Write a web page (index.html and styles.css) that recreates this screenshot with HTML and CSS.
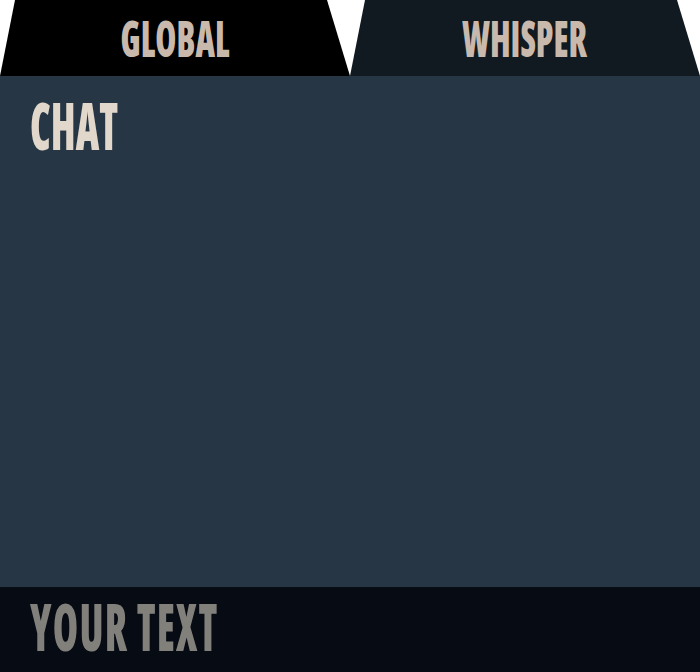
FILE: index.html
```html
<!DOCTYPE html>
<html lang="en">
<head>
<meta charset="utf-8">
<title>Chat</title>
<link rel="stylesheet" href="styles.css">
</head>
<body>
<div class="app">
  <nav class="tabs">
    <div class="tab tab-global"><span class="label">GLOBAL</span></div>
    <div class="tab tab-whisper"><span class="label">WHISPER</span></div>
  </nav>
  <main class="chat">
    <h1 class="chat-title"><span class="label">CHAT</span></h1>
  </main>
  <footer class="input-bar">
    <span class="label placeholder">YOUR TEXT</span>
  </footer>
</div>
</body>
</html>
```
FILE: styles.css
```css
html, body {
  margin: 0;
  padding: 0;
  background: #ffffff;
}
.app {
  width: 700px;
  height: 672px;
  display: flex;
  flex-direction: column;
  font-family: "Open Sans", "Roboto", sans-serif;
  font-stretch: 75%;
  font-weight: 800;
}
.label {
  display: inline-block;
  white-space: nowrap;
  line-height: 1;
  transform: scaleX(0.62);
}
.tabs {
  display: flex;
  height: 76px;
  flex: 0 0 76px;
}
.tab {
  flex: 1;
  display: flex;
  align-items: center;
  justify-content: center;
  clip-path: polygon(15px 0, calc(100% - 23px) 0, 100% 100%, 0 100%);
  color: #c8b9ac;
  font-size: 50px;
  padding-bottom: 1px;
}
.tab .label {
  transform: scaleX(0.68);
  transform-origin: center;
}
.tab-global {
  background: #000000;
}
.tab-whisper {
  background: #101a20;
}
.chat {
  flex: 1;
  background: #263644;
  padding: 3px 30px 22px;
}
.chat-title {
  margin: 0;
  font-size: 66px;
  font-weight: 800;
  color: #e1d7cb;
}
.chat-title .label,
.placeholder {
  transform-origin: left center;
}
.input-bar {
  flex: 0 0 85px;
  height: 85px;
  box-sizing: border-box;
  background: #060b14;
  display: flex;
  align-items: center;
  padding: 0 30px 10px;
  font-size: 66px;
  color: #82807b;
}
.placeholder {
  letter-spacing: 2px;
}
```
